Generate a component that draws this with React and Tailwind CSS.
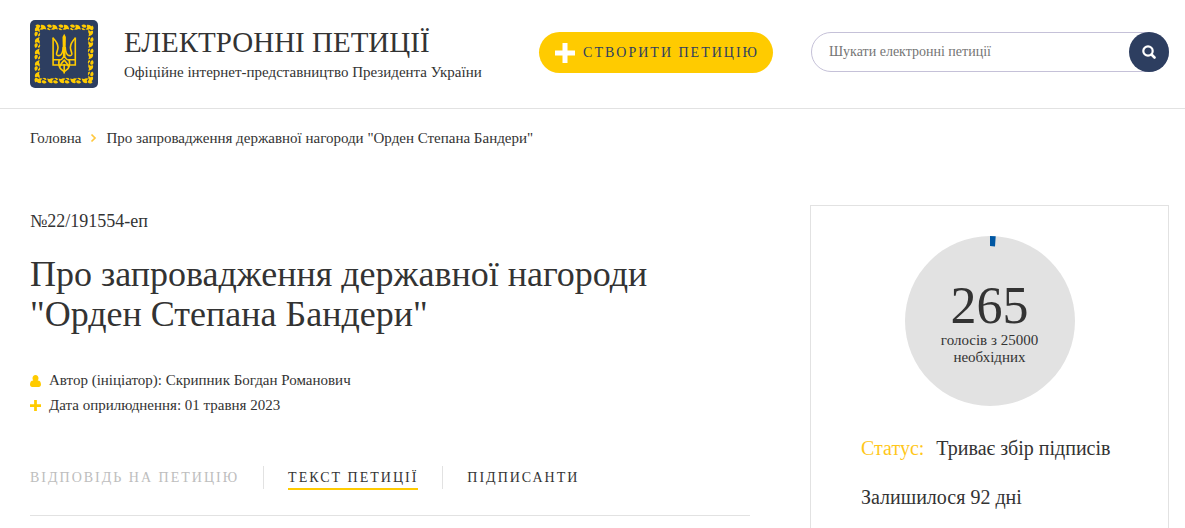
import React from "react";

function Sprigs({ angle }) {
  return (
    <g transform={`rotate(${angle} 34 34)`}>
      {[0, 1, 2, 3, 4].map((i) => (
        <g key={i} transform={`translate(${5.4 + i * 11.5} 4.2)`}>
          <path d="M0 1.600C1 0 3.400-.2 4.600 1.200C5.400 2.200 4.800 3.400 3.600 3.600L1.600 3.200Z" />
          <path d="M5.400 .8C7.600 .2 10 1.400 10.400 3.600L11 5.400L8.600 4.800L6.600 5.600L4 5.400L5.800 3.600Z" />
          <path d="M0 4L1.800 3.800L2.600 4.800L4 5L2.800 6L.8 5.600Z" />
        </g>
      ))}
    </g>
  );
}

function Emblem() {
  return (
    <svg viewBox="0 0 68 68" className="size-17 shrink-0" role="img" aria-label="Герб України">
      <rect width="68" height="68" rx="5" fill="#2d3e60" />
      <g fill="#ffcb00">
        <Sprigs angle={0} />
        <Sprigs angle={90} />
        <Sprigs angle={180} />
        <Sprigs angle={270} />
      </g>
      <g fill="none" stroke="#ffcb00" strokeWidth="1.6">
        <path d="M23.100 17.500V45H45.300V17.500" />
        <path d="M23 18C26.500 21.500 28 24 28 27.500C28 30.500 26.200 32.500 26.600 34.400C27 36 29.200 36 30.800 34.800C32.400 33.400 33 31 33.200 27" />
        <path d="M45.400 18C41.900 21.500 40.400 24 40.400 27.500C40.400 30.500 42.200 32.500 41.800 34.400C41.400 36 39.200 36 37.600 34.800C36 33.400 35.400 31 35.200 27" />
        <path d="M23 39.800H29.200C28.400 43 28.800 46 30.200 48.400L34.200 51.800L38.200 48.400C39.600 46 40 43 39.200 39.800H45.400" />
        <path d="M29.200 39.800C31 40.500 32.800 38.500 34.200 35.500C35.600 38.500 37.400 40.500 39.200 39.800M30 46.500C31 43 33 41.500 34.200 40.200C35.400 41.500 37.400 43 38.400 46.500M34.200 44V53.500" />
      </g>
      <path d="M34.200 13.800L35.900 17L35.500 36H32.900L32.500 17Z" fill="#ffcb00" />
    </svg>
  );
}

function Plus({ className }) {
  return (
    <svg viewBox="0 0 20 20" className={className} fill="currentColor" aria-hidden="true">
      <path d="M7.500 0h5v7.500H20v5h-7.500V20h-5v-7.500H0v-5h7.500z" />
    </svg>
  );
}

function Header() {
  return (
    <header className="flex items-start border-b border-[#e2e2e2] py-5 pr-4 pl-[30px]">
      <a href="#home" className="flex min-w-0 flex-1 items-center gap-[26px]">
        <Emblem />
        <span className="flex flex-col whitespace-nowrap">
          <span className="text-[29px] leading-9">ЕЛЕКТРОННІ ПЕТИЦІЇ</span>
          <span className="text-[15px] leading-6">Офіційне інтернет-представництво Президента України</span>
        </span>
      </a>
      <button
        type="button"
        className="mt-3 mr-[38px] flex h-[41px] shrink-0 items-center gap-2 rounded-full bg-[#ffcb00] pr-3.5 pl-4 text-sm tracking-[2px] whitespace-nowrap text-[#2d3e60]"
      >
        <Plus className="size-5 text-white" />
        СТВОРИТИ ПЕТИЦІЮ
      </button>
      <form role="search" className="mt-3 flex h-10 w-[358px] shrink-0 rounded-full border border-[#c5c1d8]">
        <input
          type="search"
          aria-label="Шукати електронні петиції"
          placeholder="Шукати електронні петиції"
          className="min-w-0 flex-1 rounded-full bg-transparent pl-[17px] text-sm outline-none placeholder:text-[#757575]"
        />
        <button
          type="button"
          aria-label="Шукати"
          className="-m-px flex size-10 items-center justify-center rounded-full bg-[#2d3e60] text-white"
        >
          <svg viewBox="0 0 14 14" className="size-3.5" fill="none" stroke="currentColor" aria-hidden="true">
            <circle cx="6" cy="6" r="4.700" strokeWidth="2.200" />
            <path d="M9.500 9.500L12.500 12.500" strokeWidth="2.600" strokeLinecap="round" />
          </svg>
        </button>
      </form>
    </header>
  );
}

function Breadcrumbs() {
  return (
    <nav aria-label="Навігація" className="flex items-center gap-[9px] px-[30px] pt-[17px] text-[15px] leading-6">
      <a href="#home">Головна</a>
      <svg viewBox="0 0 7 10" className="h-2.5 w-[7px]" fill="none" stroke="#ffc83d" strokeWidth="1.7" aria-hidden="true">
        <path d="M1.500 1.500L5 5L1.500 8.500" />
      </svg>
      <span>Про запровадження державної нагороди "Орден Степана Бандери"</span>
    </nav>
  );
}

function Tabs() {
  return (
    <nav
      aria-label="Розділи петиції"
      className="mt-12 flex items-center border-b border-[#e2e2e2] pb-[26px] text-sm leading-5 tracking-[2px] whitespace-nowrap"
    >
      <span className="mr-6 text-[#bdbdbd]">ВІДПОВІДЬ НА ПЕТИЦІЮ</span>
      <span className="flex h-[23px] items-center border-x border-[#e2e2e2] px-6">
        <a href="#text" aria-current="page" className="mt-0.5 border-b-2 border-[#ffcb00]">
          ТЕКСТ ПЕТИЦІЇ
        </a>
      </span>
      <a href="#signers" className="ml-6">
        ПІДПИСАНТИ
      </a>
    </nav>
  );
}

function Petition() {
  return (
    <article className="min-w-0 flex-1">
      <p className="pt-1 text-lg leading-6">№22/191554-еп</p>
      <h1 className="mt-[21px] text-4xl leading-10">
        Про запровадження державної нагороди "Орден Степана Бандери"
      </h1>
      <ul className="mt-[34px] text-[15px] leading-[25px]">
        <li className="flex items-center gap-2">
          <svg viewBox="0 0 11 12" className="h-3 w-[11px]" fill="#ffcb00" aria-hidden="true">
            <path d="M5.500 0C7.300 0 8.500 1.400 8.500 3.200C8.500 4.100 8.200 4.900 7.700 5.500C9.900 5.600 11 7 11 9.600C11 11.200 10.100 12 8.800 12H2.200C.9 12 0 11.200 0 9.600C0 7 1.100 5.600 3.300 5.500C2.800 4.900 2.500 4.100 2.500 3.200C2.500 1.400 3.700 0 5.500 0Z" />
          </svg>
          Автор (ініціатор): Скрипник Богдан Романович
        </li>
        <li className="flex items-center gap-2">
          <Plus className="size-[11px] text-[#ffcb00]" />
          Дата оприлюднення: 01 травня 2023
        </li>
      </ul>
      <Tabs />
    </article>
  );
}

function VotePanel() {
  return (
    <aside className="w-[359px] shrink-0 border border-[#e2e2e2] px-[50px] pt-[30px] pb-10 text-xl leading-7">
      <div className="mx-auto grid size-[170px] *:col-start-1 *:row-start-1">
        <svg viewBox="0 0 170 170" aria-hidden="true">
          <circle cx="85" cy="85" r="85" fill="#e2e2e2" />
          <path d="M85 0A85 85 0 0 1 90.700 .2L90 10.500A75 75 0 0 0 85 10Z" fill="#0057a3" />
        </svg>
        <div className="flex flex-col items-center justify-center pt-1 text-center">
          <span className="text-[52px] leading-[52px]">265</span>
          <span className="w-28 text-[15px] leading-[17px]">голосів з 25000 необхідних</span>
        </div>
      </div>
      <p className="mt-7 flex gap-3 whitespace-nowrap">
        <span className="text-[#ffc71a]">Статус:</span>
        <span>Триває збір підписів</span>
      </p>
      <p className="mt-[21px]">Залишилося 92 дні</p>
    </aside>
  );
}

export default function App() {
  return (
    <div className="min-h-screen bg-white font-['Liberation_Serif',serif] text-[#333333]">
      <Header />
      <Breadcrumbs />
      <main className="flex items-start gap-[60px] pt-[55px] pr-4 pl-[30px]">
        <Petition />
        <VotePanel />
      </main>
    </div>
  );
}
